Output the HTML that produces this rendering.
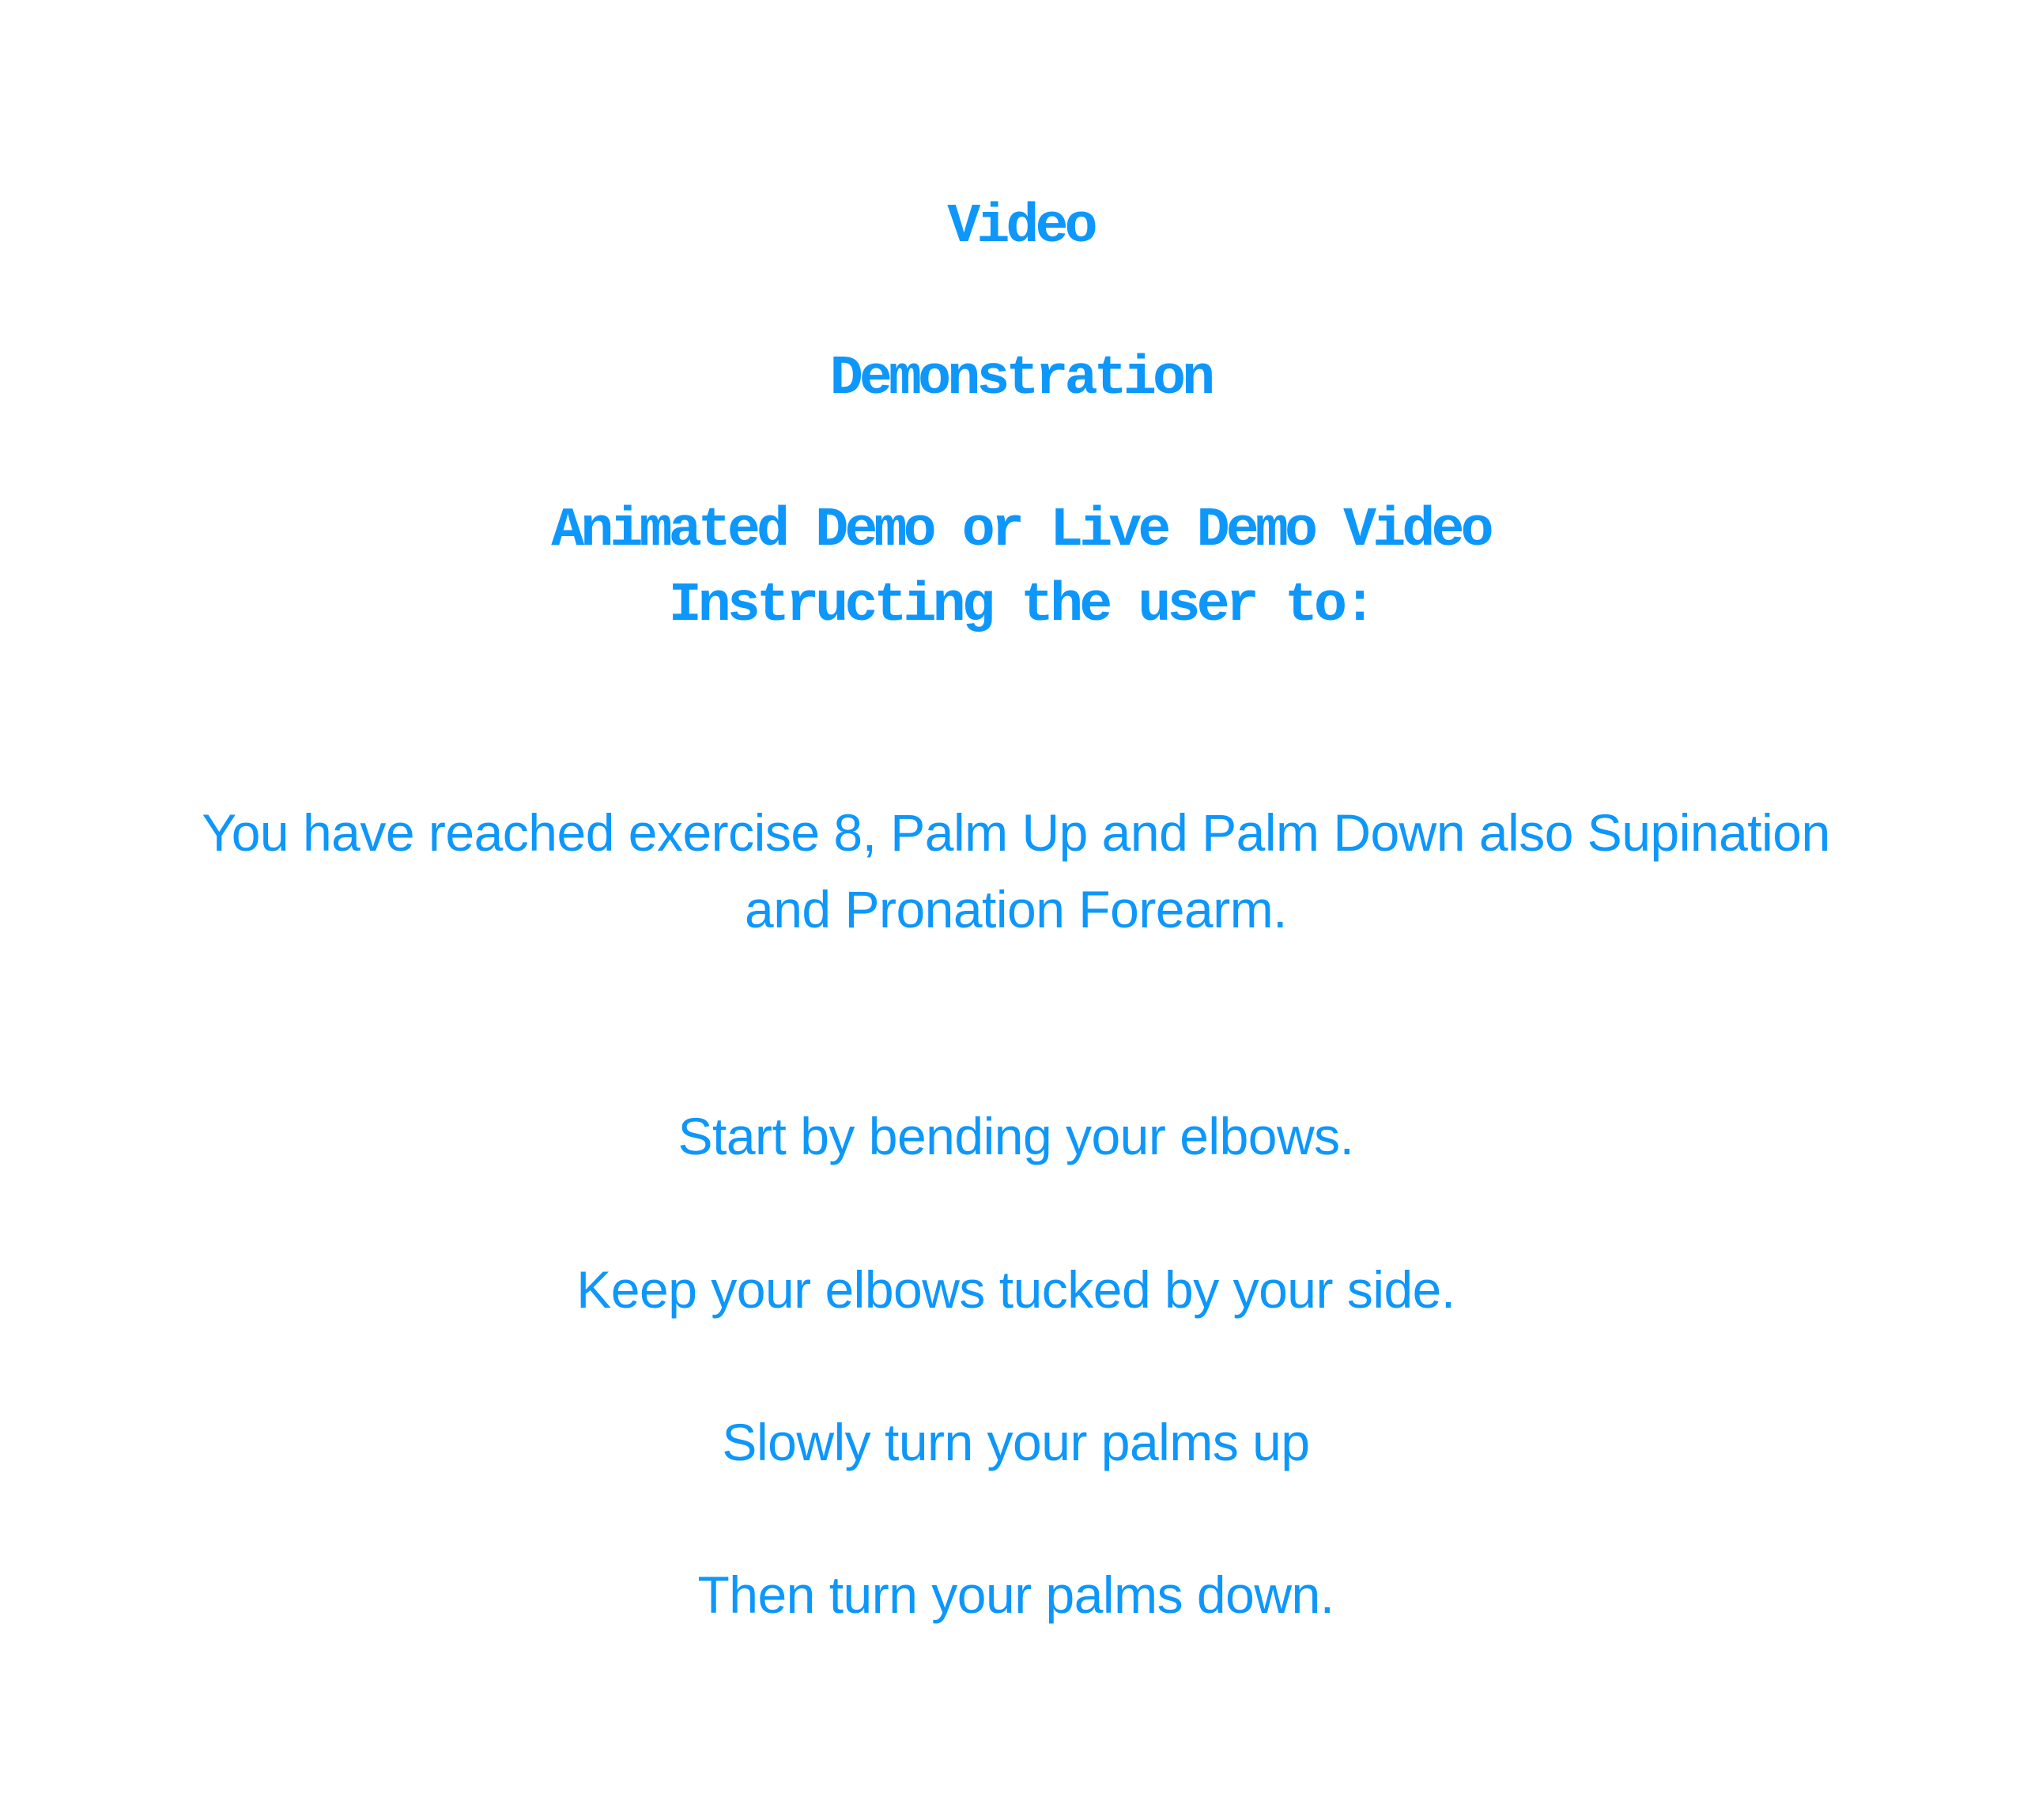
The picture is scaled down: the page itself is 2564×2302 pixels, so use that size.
<!DOCTYPE html>
<html><head><meta charset="utf-8"><style>
html,body{margin:0;padding:0;background:#fff;}
body{width:2564px;height:2302px;position:relative;overflow:hidden;}
.l{position:absolute;left:0;width:2582px;text-align:center;white-space:nowrap;color:#0d97fb;line-height:1;}
.m{font-family:"Liberation Mono",monospace;font-weight:bold;font-size:70px;letter-spacing:-4.9px;}
.s{font-family:"Liberation Sans",sans-serif;font-size:66px;letter-spacing:-0.5px;left:-6px;}
</style></head><body>
<div class="l m" style="top:253px">Video</div>
<div class="l m" style="top:445px">Demonstration</div>
<div class="l m" style="top:637px">Animated Demo or Live Demo Video</div>
<div class="l m" style="top:732px">Instructing the user to:</div>
<div class="l s" style="top:1020px">You have reached exercise 8, Palm Up and Palm Down also Supination</div>
<div class="l s" style="top:1117px">and Pronation Forearm.</div>
<div class="l s" style="top:1404px">Start by bending your elbows.</div>
<div class="l s" style="top:1598px">Keep your elbows tucked by your side.</div>
<div class="l s" style="top:1791px">Slowly turn your palms up</div>
<div class="l s" style="top:1984px">Then turn your palms down.</div>
</body></html>
